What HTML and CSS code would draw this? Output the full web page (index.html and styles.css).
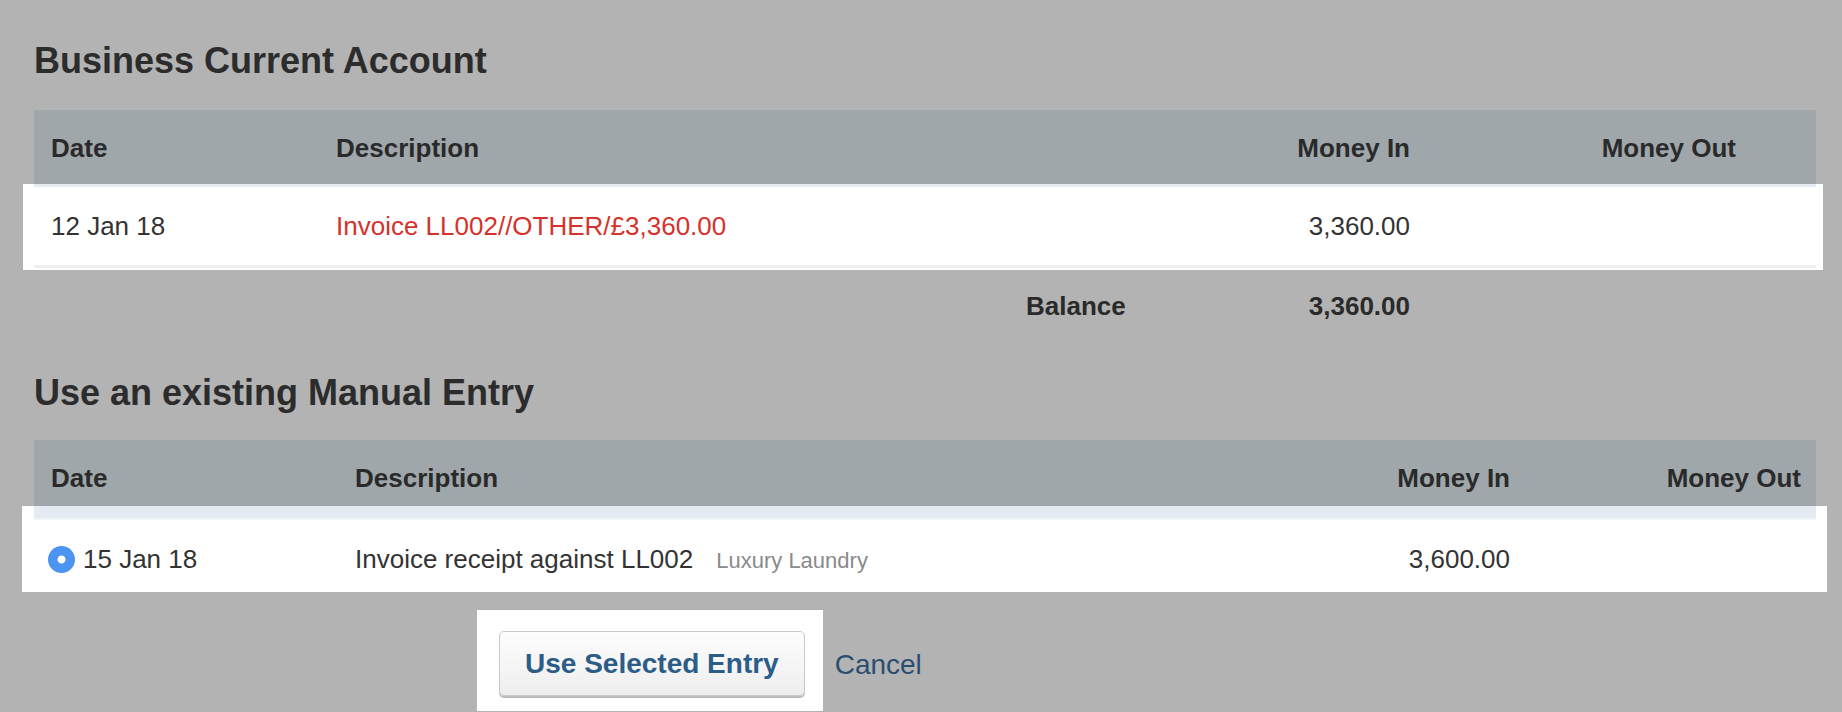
FILE: index.html
```html
<!DOCTYPE html>
<html lang="en">
<head>
<meta charset="utf-8">
<title>Match bank entry</title>
<link rel="stylesheet" href="styles.css">
</head>
<body>
<main class="page">
  <h1 class="title title-first">Business Current Account</h1>
  <section class="ledger">
    <div class="thead thead-a grid-a">
      <div class="cell">Date</div>
      <div class="cell">Description</div>
      <div class="cell num">Money In</div>
      <div class="cell num">Money Out</div>
      <div class="cell"></div>
    </div>
    <div class="spot spot-a">
      <div class="strip strip-a"></div>
      <div class="row row-a grid-a">
        <div class="cell">12 Jan 18</div>
        <div class="cell desc-red">Invoice LL002//OTHER/£3,360.00</div>
        <div class="cell num">3,360.00</div>
        <div class="cell num"></div>
        <div class="cell"></div>
      </div>
      <div class="rule"></div>
    </div>
    <div class="balance">
      <div class="cell"></div>
      <div class="cell">Balance</div>
      <div class="cell num">3,360.00</div>
      <div class="cell"></div>
    </div>
  </section>

  <h2 class="title title-second">Use an existing Manual Entry</h2>
  <section class="ledger">
    <div class="thead thead-b grid-b">
      <div class="cell">Date</div>
      <div class="cell">Description</div>
      <div class="cell num">Money In</div>
      <div class="cell num last">Money Out</div>
    </div>
    <div class="spot spot-b">
      <div class="strip strip-b"></div>
      <div class="strip strip-b2"></div>
      <div class="row row-b grid-b">
        <div class="cell first date-radio"><span class="radio" role="radio" aria-checked="true"></span>15 Jan 18</div>
        <div class="cell">Invoice receipt against LL002<span class="contact">Luxury Laundry</span></div>
        <div class="cell num">3,600.00</div>
        <div class="cell num last"></div>
      </div>
    </div>
  </section>

  <div class="actions">
    <div class="spot spot-btn">
      <button class="btn" type="button">Use Selected Entry</button>
    </div>
    <a class="cancel" href="#">Cancel</a>
  </div>
</main>
</body>
</html>
```

FILE: styles.css
```css
html, body {
  margin: 0;
  padding: 0;
  background: #b3b3b3;
  height: 712px;
  overflow: hidden;
}

body {
  font-family: "Liberation Sans", Arial, Helvetica, sans-serif;
  color: #2b2b2b;
}

.page {
  padding: 0 26px 0 34px;
}

.title {
  margin: 0;
  font-size: 36px;
  line-height: 42px;
  font-weight: bold;
  color: #2c2c2c;
}

.title-first {
  padding-top: 40px;
}

.title-second {
  margin-top: 30px;
}

.cell {
  padding: 0 17px;
  font-size: 26px;
  line-height: 30px;
  white-space: nowrap;
}

.num {
  text-align: right;
}

.grid-a {
  display: grid;
  grid-template-columns: 285px 1fr 200px 326px 63px;
}

.grid-b {
  display: grid;
  grid-template-columns: 304px 1fr 200px 289px;
}

.grid-b .first {
  padding-left: 14px;
}

.grid-b .last {
  padding-right: 15px;
}

.thead {
  background: #a0a7aa;
  font-weight: bold;
  color: #2a2a2a;
  align-items: start;
}

.thead-a {
  margin-top: 28px;
  height: 74px;
  padding-top: 23px;
  box-sizing: border-box;
}

.thead-b {
  margin-top: 26px;
  height: 66px;
  padding-top: 23px;
  box-sizing: border-box;
}

.spot {
  background: #ffffff;
}

.spot-a {
  margin: 0 -7px 0 -11px;
  padding: 0 7px 2px 11px;
}

.spot-b {
  margin: 0 -11px 0 -12px;
  padding: 0 11px 0 12px;
}

.strip {
  background: #e4ebf2;
}

.strip-a {
  height: 3px;
}

.strip-b {
  height: 12px;
}

.strip-b2 {
  height: 2px;
  background: #f2f5f8;
}

.row {
  color: #333333;
  align-items: start;
  box-sizing: border-box;
}

.row-a {
  height: 78px;
  padding-top: 24px;
}

.row-b {
  height: 72px;
  padding-top: 24px;
}

.rule {
  height: 3px;
  background: #f0f0f0;
}

.desc-red {
  color: #d5322b;
}

.balance {
  display: grid;
  grid-template-columns: 1fr 134px 284px 389px;
  height: 72px;
  padding-top: 21px;
  box-sizing: border-box;
  font-weight: bold;
  color: #2a2a2a;
}

.date-radio {
  display: flex;
  align-items: center;
}

.radio {
  width: 27px;
  height: 27px;
  border-radius: 50%;
  margin-right: 8px;
  flex: none;
  background: radial-gradient(circle, #ffffff 0 3.6px, #4b94f1 4.4px);
}

.contact {
  margin-left: 23px;
  font-size: 22px;
  color: #8a8a8a;
}

.actions {
  display: flex;
  align-items: flex-start;
  margin-top: 18px;
}

.spot-btn {
  margin-left: 443px;
  padding: 21px 18px 15px 22px;
}

.btn {
  display: block;
  height: 65px;
  padding: 0 25px;
  border: 1px solid #c9c9c9;
  border-radius: 5px;
  background: linear-gradient(#fdfdfd, #eeeeee);
  box-shadow: 0 2px 0 #bcbcbc;
  font-family: "Liberation Sans", Arial, Helvetica, sans-serif;
  font-size: 28px;
  font-weight: bold;
  color: #2c5d88;
  cursor: pointer;
}

.cancel {
  margin-left: 12px;
  margin-top: 39px;
  font-size: 28px;
  line-height: 32px;
  color: #2a4e70;
  text-decoration: none;
}
```
